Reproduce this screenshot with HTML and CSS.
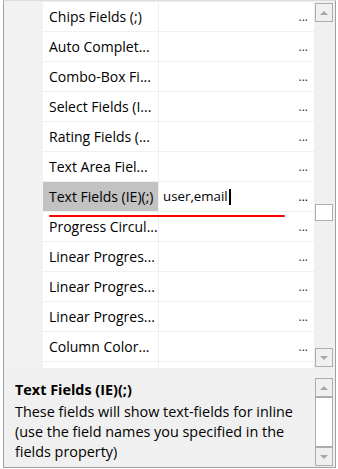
FILE: index.html
```html
<!DOCTYPE html>
<html>
<head>
<meta charset="utf-8">
<link rel="stylesheet" href="styles.css">
</head>
<body>
<div class="frame">
  <div class="main">
    <div class="rows">
      <div class="row"><div class="gut"></div><div class="name">Chips Fields (;)</div><div class="val"><span class="dots">...</span></div></div>
      <div class="row"><div class="gut"></div><div class="name">Auto Complet...</div><div class="val"><span class="dots">...</span></div></div>
      <div class="row"><div class="gut"></div><div class="name">Combo-Box Fi...</div><div class="val"><span class="dots">...</span></div></div>
      <div class="row"><div class="gut"></div><div class="name">Select Fields (I...</div><div class="val"><span class="dots">...</span></div></div>
      <div class="row"><div class="gut"></div><div class="name">Rating Fields (...</div><div class="val"><span class="dots">...</span></div></div>
      <div class="row"><div class="gut"></div><div class="name">Text Area Fiel...</div><div class="val"><span class="dots">...</span></div></div>
      <div class="row active"><div class="gut"></div><div class="name">Text Fields (IE)(;)</div><div class="val"><span class="edit">user,email</span><span class="caret"></span><span class="dots">...</span></div></div>
      <div class="row"><div class="gut"></div><div class="name">Progress Circul...</div><div class="val"><span class="dots">...</span></div></div>
      <div class="row"><div class="gut"></div><div class="name">Linear Progres...</div><div class="val"><span class="dots">...</span></div></div>
      <div class="row"><div class="gut"></div><div class="name">Linear Progres...</div><div class="val"><span class="dots">...</span></div></div>
      <div class="row"><div class="gut"></div><div class="name">Linear Progres...</div><div class="val"><span class="dots">...</span></div></div>
      <div class="row"><div class="gut"></div><div class="name">Column Color...</div><div class="val"><span class="dots">...</span></div></div>
      <div class="row partial"><div class="gut"></div><div class="name"></div><div class="val"></div></div>
    </div>
    <div class="sb main-sb">
      <div class="btn"><svg width="8" height="4" viewBox="0 0 8 4"><polygon points="0,4 8,4 4,0" fill="#a6a6a6"/></svg></div>
      <div class="track"><div class="thumb main-thumb"></div></div>
      <div class="btn"><svg width="8" height="4" viewBox="0 0 8 4"><polygon points="0,0 8,0 4,4" fill="#a6a6a6"/></svg></div>
    </div>
  </div>
  <div class="desc">
    <div class="desc-text">
      <div class="title">Text Fields (IE)(;)</div>
      <div class="body">These fields will show text-fields for inline<br>(use the field names you specified in the<br>fields property)</div>
    </div>
    <div class="sb desc-sb">
      <div class="btn"><svg width="8" height="4" viewBox="0 0 8 4"><polygon points="0,4 8,4 4,0" fill="#a6a6a6"/></svg></div>
      <div class="track"><div class="thumb desc-thumb"></div></div>
      <div class="btn"><svg width="8" height="4" viewBox="0 0 8 4"><polygon points="0,0 8,0 4,4" fill="#a6a6a6"/></svg></div>
    </div>
  </div>
  <div class="redline"></div>
</div>
</body>
</html>
```
FILE: styles.css
```css
html, body {
  margin: 0;
  padding: 0;
  background: #ffffff;
}
body {
  font-family: "Open Sans", "Noto Sans", sans-serif;
  font-size: 14.4px;
  color: #000;
}
.frame {
  position: relative;
  margin-left: 3px;
  width: 331px;
  height: 466px;
  border-left: 1px solid #a0a0a0;
  border-right: 1px solid #a0a0a0;
  border-bottom: 1px solid #a0a0a0;
  border-top: 1px solid #dcdcdc;
  display: flex;
  flex-direction: column;
  background: #f0f0f0;
}
.main {
  display: flex;
  height: 367px;
  flex: none;
}
.rows {
  flex: 1;
  border-top: 1px solid #f0f0f0;
  background: #fff;
  overflow: hidden;
  display: flex;
  flex-direction: column;
  font-size: 14px;
}
.row {
  display: grid;
  grid-template-columns: 39px 116px 1fr;
  height: 30px;
  flex: none;
  box-sizing: border-box;
}
.row.partial {
  height: 6px;
}
.gut {
  background: #f2f2f2;
}
.name {
  border-right: 1px solid #f0f0f0;
  border-bottom: 1px solid #f0f0f0;
  padding-left: 6px;
  line-height: 29px;
  white-space: nowrap;
  overflow: hidden;
}
.row.partial .name, .row.partial .val {
  border-bottom: none;
}
.active .name {
  background: #c2c2c2;
}
.val {
  border-bottom: 1px solid #f0f0f0;
  display: flex;
  align-items: baseline;
  padding-left: 4px;
  padding-right: 6px;
  line-height: 29px;
  white-space: nowrap;
}
.edit {
  font-size: 13.3px;
}
.dots {
  margin-left: auto;
  font-size: 12px;
  color: #2a2a3a;
}
.active .dots {
  color: #000;
}
.caret {
  display: inline-block;
  width: 2px;
  height: 16px;
  background: #000;
  margin-left: 1px;
  align-self: center;
}
.sb {
  width: 21px;
  flex: none;
  display: flex;
  flex-direction: column;
  box-sizing: border-box;
  background: #f0f0f0;
}
.main-sb {
  padding: 2px 2px 1px 1px;
}
.desc-sb {
  padding: 10px 2px 1px 1px;
}
.btn {
  height: 19px;
  box-sizing: border-box;
  border: 1px solid #adadad;
  background: #f0f0f0;
  display: flex;
  align-items: center;
  justify-content: center;
  flex: none;
}
.track {
  flex: 1;
  display: flex;
  flex-direction: column;
}
.thumb {
  box-sizing: border-box;
  border: 1px solid #adadad;
  background: #fff;
}
.main-thumb {
  margin-top: 182px;
  height: 17px;
}
.desc-thumb {
  flex: 1;
}
.desc {
  flex: 1;
  display: flex;
}
.desc-text {
  flex: 1;
  padding: 12px 0 0 11px;
}
.title {
  font-weight: bold;
  line-height: 20px;
}
.body {
  margin-top: 2px;
  line-height: 20px;
}
.redline {
  position: absolute;
  left: 45px;
  top: 214px;
  width: 236px;
  height: 2px;
  background: #f00;
  border-radius: 1px;
}
```
